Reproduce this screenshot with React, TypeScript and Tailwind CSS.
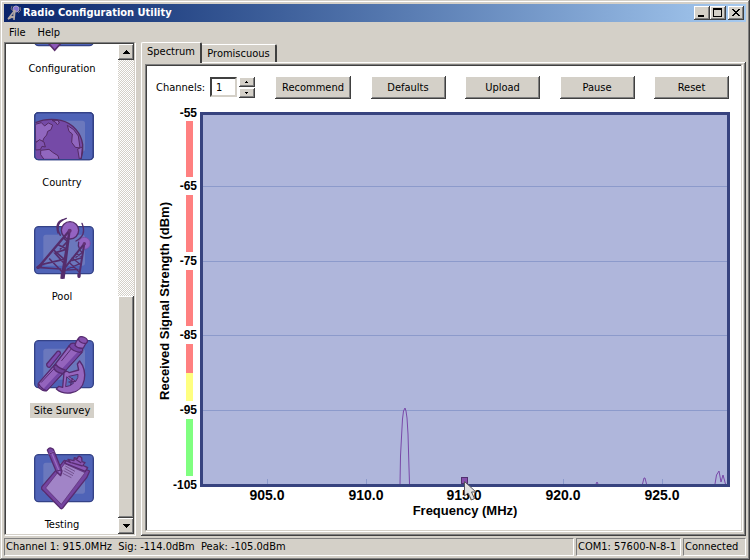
import { useState, type ReactNode } from "react";

const raised = "bg-[#d4d0c8] shadow-[inset_-1px_-1px_#404040,inset_1px_1px_#ffffff,inset_-2px_-2px_#808080]";
const sunken = "border border-t-[#808080] border-l-[#808080] border-r-[#d4d0c8] border-b-[#d4d0c8] shadow-[inset_1px_1px_#404040,1px_1px_#ffffff]";
const statusCell = "flex items-center border border-t-[#808080] border-l-[#808080] border-r-white border-b-white px-px";

function Tile({ top, children }: { top: number; children: ReactNode }) {
  return (
    <svg viewBox={`84 ${top} 204 204`} className="h-[68px] w-[68px] shrink-0" aria-hidden="true">
      <rect x="104" y={top + 38} width="176" height="141" rx="12" fill="#4f63b7" stroke="#344287" strokeWidth="4" />
      <rect x="130" y={top + 62} width="125" height="93" rx="8" fill="#6b78bd" />
      {children}
    </svg>
  );
}

function ConfigurationIcon() {
  return (
    <Tile top={36}>
      <path d="M143 205 L164 229 L185 205Z" fill="#8c58b8" stroke="#5a2c6c" strokeWidth="5" />
    </Tile>
  );
}

function CountryIcon() {
  return (
    <Tile top={30}>
      <path d="M106 98 C129 88 158 86 183 91 C221 100 244 132 248 163 Q250 187 243 207 H115 Q106 207 106 198Z" fill="#754aa7" />
      <g fill="#9167bf" stroke="#552b65" strokeWidth="3" strokeLinejoin="round">
        <path d="M106 103 L124 98 L134 108 L145 99 L158 105 L153 119 L143 124 L140 135 L132 144 L126 158 L119 150 L107 157Z" />
        <path d="M107 158 L119 149 L132 156 L136 171 L126 169 L121 179 L107 180Z" fill="#8054af" />
        <path d="M122 181 L147 178 L158 187 L174 197 L177 208 H132 L122 194Z" />
        <path d="M156 91 L174 91 L178 99 L172 104 L166 96Z" />
        <path d="M202 106 L221 119 L235 138 L240 174 L226 172 L215 157 L217 132 L207 124Z" />
        <path d="M233 177 L247 171 L244 205 L238 207Z" />
      </g>
      <path d="M106 98 C129 88 158 86 183 91 C221 100 244 132 248 163 Q250 187 243 207" fill="none" stroke="#552b65" strokeWidth="4" />
      <rect x="104" y="68" width="176" height="141" rx="12" fill="none" stroke="#344287" strokeWidth="4" />
    </Tile>
  );
}

function PoolIcon() {
  return (
    <Tile top={42}>
      <g fill="none" stroke="#552d6c" strokeLinecap="round">
        <circle cx="210" cy="91" r="26" fill="#9463c2" strokeWidth="4" />
        <circle cx="253" cy="130" r="18" fill="#9463c2" strokeWidth="2" stroke="#7548a1" />
        <path d="M181 106 Q161 69 199 55 M174 99 Q164 68 188 59 M228 123 Q261 107 246 70 M238 145 Q233 138 236 127" strokeWidth="4" />
        <path d="M208 92 L114 203" strokeWidth="7" />
        <path d="M205 92 H212 L194 236 H181Z" fill="#552d6c" stroke="none" />
        <path d="M112 202 L182 207 M149 177 L187 216 M176 135 L202 148 M192 115 L205 126 M163 152 L194 179 M202 125 L181 147 M198 148 L164 159 L190 187 M191 178 L124 194" strokeWidth="5" />
        <path d="M253 131 L190 209 M253 131 L237 230" strokeWidth="6" />
        <path d="M187 211 L234 208 M207 187 L237 215 M228 161 L247 171 M238 149 L248 158 M217 174 L242 194 M246 158 L228 172 M243 174 L216 182 M240 191 L202 207" strokeWidth="4" />
        <path d="M114 202 L122 197 M187 223 V232 M237 223 V229" strokeWidth="10" />
      </g>
      <circle cx="209" cy="92" r="6" fill="#643278" />
      <circle cx="253" cy="131" r="5" fill="#643278" />
    </Tile>
  );
}

function SurveyIcon() {
  return (
    <Tile top={24}>
      <g stroke="#562b70" strokeWidth="4" strokeLinejoin="round" strokeLinecap="round">
        <path d="M192 158 Q200 150 208 158 L236 150 L232 132 L239 123 C262 152 262 212 211 219 Q186 222 169 207 L176 199 L188 202Z" fill="#9767bf" />
        <path d="M207 169 L234 163 Q236 172 228 183Z M201 171 L221 189 Q212 199 198 200Z" fill="#5b6cb9" strokeWidth="3" />
        <path d="M207 186 L226 184 M217 176 L212 194" fill="none" />
        <path d="M140 132 L172 94 Q180 91 182 101 L149 142 Q140 143 140 132Z" fill="#7c4caf" />
        <path d="M115 190 L166 132 L207 78 L246 97 L197 151 L141 211 Q132 216 122 207 Q112 202 115 190Z" fill="#9464bd" />
        <path d="M136 207 L188 151 L237 98" stroke="#7446a6" strokeWidth="9" fill="none" />
        <path d="M141 211 L197 151 L246 97 M124 187 L168 140 M185 122 L216 84" fill="none" strokeWidth="3" />
        <path d="M166 132 Q177 146 198 151 L188 161 Q163 157 161 140Z" fill="#714399" />
        <path d="M207 78 Q217 94 239 97 L248 93 Q250 83 237 76 Q222 66 213 71Z" fill="#7545a5" />
        <path d="M225 76 Q227 65 235 55 L260 66 L250 84 Q234 87 225 76Z" fill="#9464bd" />
        <ellipse cx="249" cy="60" rx="14" ry="9" transform="rotate(24 249 60)" fill="#8551ad" />
        <path d="M116 191 Q122 205 139 212" fill="none" />
      </g>
    </Tile>
  );
}

function TestingIcon() {
  return (
    <Tile top={36}>
      <g stroke="#582c70" strokeWidth="4" strokeLinejoin="round">
        <path d="M193 91 L269 123 L260 143 L188 234 Q184 240 177 230 L125 177 Q123 172 129 166Z" fill="#7544a0" />
        <path d="M194 101 L255 128 L184 223 L137 174Z" fill="#a184c7" strokeWidth="2" />
        <path d="M204 88 L222 92 L223 83 L232 86 Q235 73 245 83 L246 95 L255 98 L249 106 L263 113 L256 124 L194 99 L199 92 L212 98Z" fill="#8b58b5" />
        <path d="M214 98 L248 108 M226 87 L244 99" />
        <path d="M196 108 L225 124 M194 115 L222 131 M191 122 L219 137 M188 130 L214 143" stroke="#5a3872" strokeWidth="2" />
        <path d="M142 60 Q149 49 160 58 L186 123 L182 137 L169 125Z" fill="#7646a4" />
        <path d="M145 73 L163 65 M155 68 L180 129" stroke="#9a6cc0" strokeWidth="4" />
        <path d="M146 73 L163 66 M170 123 L184 120" strokeWidth="3" />
      </g>
    </Tile>
  );
}

const sections = [
  { name: "Configuration", icon: <ConfigurationIcon /> },
  { name: "Country", icon: <CountryIcon /> },
  { name: "Pool", icon: <PoolIcon /> },
  { name: "Site Survey", icon: <SurveyIcon /> },
  { name: "Testing", icon: <TestingIcon /> },
];

function Arrow({ down = false }: { down?: boolean }) {
  return (
    <svg viewBox="0 0 7 4" className="h-1 w-[7px]" shapeRendering="crispEdges" aria-hidden="true">
      <path d={down ? "M0 0H7V1H6V2H5V3H4V4H3V3H2V2H1V1H0Z" : "M0 4H7V3H6V2H5V1H4V0H3V1H2V2H1V3H0Z"} />
    </svg>
  );
}

function SpinArrow({ down = false }: { down?: boolean }) {
  return (
    <svg viewBox="0 0 3 2" className="mr-px h-[2px] w-[3px]" shapeRendering="crispEdges" aria-hidden="true">
      <path d={down ? "M0 0H3V1H2V2H1V1H0Z" : "M0 2H3V1H2V0H1V1H0Z"} />
    </svg>
  );
}

function Sidebar() {
  const [selected, setSelected] = useState("Site Survey");

  return (
    <aside className={`mr-px mb-px flex w-[131px] shrink-0 bg-white pt-px pl-px ${sunken}`}>
      <nav className="flex min-h-0 flex-1 flex-col items-center justify-end gap-6 overflow-hidden pb-0.5">
        {sections.map((s) => (
          <button key={s.name} onClick={() => setSelected(s.name)} className="flex shrink-0 flex-col items-center gap-[7px]">
            {s.icon}
            <span className={`h-[15px] px-1 leading-4 whitespace-nowrap ${s.name === selected ? "bg-[#d4d0c8]" : ""}`}>{s.name}</span>
          </button>
        ))}
      </nav>
      <div className="flex w-4 flex-col bg-[conic-gradient(#d4d0c8_25%,#ffffff_0_50%,#d4d0c8_0_75%,#ffffff_0)] bg-[length:2px_2px]">
        <button aria-label="Scroll up" className={`flex h-4 shrink-0 items-center justify-center ${raised}`}><Arrow /></button>
        <div className="flex-[235]" />
        <div className={`flex-[222] ${raised}`} />
        <button aria-label="Scroll down" className={`flex h-4 shrink-0 items-center justify-center ${raised}`}><Arrow down /></button>
      </div>
    </aside>
  );
}

const levels = [
  { label: "-55", y: 14 },
  { label: "-65", y: 87 },
  { label: "-75", y: 162 },
  { label: "-85", y: 236 },
  { label: "-95", y: 311 },
  { label: "-105", y: 386 },
];

const frequencies = [
  { label: "905.0", x: 120 },
  { label: "910.0", x: 219 },
  { label: "915.0", x: 317 },
  { label: "920.0", x: 416 },
  { label: "925.0", x: 515 },
];

const bars = [
  { y: 22, h: 56, color: "#ff8080" },
  { y: 96, h: 57, color: "#ff8080" },
  { y: 171, h: 56, color: "#ff8080" },
  { y: 245, h: 29, color: "#ff8080" },
  { y: 274, h: 28, color: "#ffff80" },
  { y: 320, h: 57, color: "#80ff80" },
];

function SpectrumChart() {
  return (
    <svg
      viewBox="0 0 594 431"
      className="min-h-0 w-full flex-1 font-['Liberation_Sans',Arial,sans-serif] font-bold"
      role="img"
      aria-label="Received signal strength by frequency"
    >
      <g shapeRendering="crispEdges">
        {bars.map((b) => (
          <rect key={b.y} x="39" y={b.y} width="7" height={b.h} fill={b.color} />
        ))}
        <rect x="53" y="13" width="530" height="375" fill="#37437f" />
        <rect x="56" y="16" width="524" height="369" fill="#afb6db" />
        {levels.slice(1, 5).map((l) => (
          <rect key={l.y} x="56" y={l.y} width="524" height="1" fill="#8c9acb" />
        ))}
        {frequencies.map((f) => (
          <rect key={f.x} x={f.x} y="380" width="1" height="5" fill="#8c9acb" />
        ))}
      </g>
      <g fontSize="12" textAnchor="end">
        {levels.map((l) => (
          <text key={l.label} x="50" y={l.y + 4}>{l.label}</text>
        ))}
      </g>
      <g fontSize="14" textAnchor="middle">
        {frequencies.map((f) => (
          <text key={f.label} x={f.x} y="401">{f.label}</text>
        ))}
      </g>
      <text x="318" y="416" fontSize="13" textAnchor="middle">Frequency (MHz)</text>
      <text transform="translate(22 202) rotate(-90)" fontSize="13" textAnchor="middle">Received Signal Strength (dBm)</text>

      <g fill="none" stroke="#7848a8">
        <path d="M253 385L253.5 357L254.5 338L255.5 320L256.5 312L258 309L259 312L260 319L261 335L262 369L262.5 385" />
        <path d="M449 385L450 383L451 385M495.500 385L497 379L498 379L499.500 385" />
        <path d="M568 385L569.5 376L572 372L574 383L576 376L578.5 385" />
      </g>
      <rect x="314.500" y="378.500" width="6" height="6" fill="#8650ad" stroke="#51306f" />
      <path d="M317.500 382.500V397L321 394L324.500 401L327.500 399.500L324.500 393H329Z" fill="#e2e2e2" stroke="#55555f" />
    </svg>
  );
}

const actions = ["Recommend", "Defaults", "Upload", "Pause", "Reset"];

function SpectrumPanel() {
  const [channels, setChannels] = useState(1);

  return (
    <div className={`mr-px mb-px flex min-h-0 flex-1 flex-col bg-white pt-[11px] pl-px ${sunken}`}>
      <div className="flex h-[23px] shrink-0 pr-3 pl-[9px]">
        <label htmlFor="channels" className="w-[54px] shrink-0 leading-6">Channels:</label>
        <input
          id="channels"
          value={channels}
          onChange={(e) => setChannels(Number(e.target.value) || 1)}
          className="mt-px h-5 w-[27px] shrink-0 border-2 border-t-[#404040] border-r-[#d4d0c8] border-b-[#d4d0c8] border-l-[#404040] bg-white pl-1 outline-none"
        />
        <div className="mt-px mr-5 ml-0.5 flex w-4 shrink-0 flex-col gap-px">
          <button aria-label="More channels" onClick={() => setChannels(channels + 1)} className={`flex h-2.5 items-center justify-center ${raised}`}><SpinArrow /></button>
          <button aria-label="Fewer channels" onClick={() => setChannels(Math.max(1, channels - 1))} className={`flex h-2.5 items-center justify-center ${raised}`}><SpinArrow down /></button>
        </div>
        <div className="flex flex-1 justify-between">
          {actions.map((a) => (
            <button key={a} className={`w-[75px] first:w-[76px] ${raised}`}>{a}</button>
          ))}
        </div>
      </div>
      <SpectrumChart />
    </div>
  );
}

function TitleBar() {
  return (
    <header className="flex h-[18px] shrink-0 items-center bg-linear-to-r from-[#0a246a] to-[#a6caf0] px-0.5 text-white">
      <svg viewBox="0 0 16 16" className="mr-px h-4 w-4" aria-hidden="true">
        <circle cx="10" cy="4" r="3" fill="#8272d2" stroke="#a9a0c0" />
        <path d="M6 1Q4 4 7 6M14 2Q16 6 12 8" fill="none" stroke="#86777f" />
        <path d="M9 5L2 14M9 5L8 15M4 11L8 13M6 8L9 10M2 14L8 11" fill="none" stroke="#b4a9a6" strokeWidth="1.500" />
      </svg>
      <h1 className="flex-1 font-bold">Radio Configuration Utility</h1>
      <button aria-label="Minimize" className={`h-3.5 w-4 ${raised}`}>
        <svg viewBox="0 0 16 14" className="text-black" fill="currentColor" shapeRendering="crispEdges"><path d="M4 9H10V11H4Z" /></svg>
      </button>
      <button aria-label="Maximize" className={`mr-0.5 h-3.5 w-4 ${raised}`}>
        <svg viewBox="0 0 16 14" className="text-black" fill="currentColor" shapeRendering="crispEdges"><path d="M3 2H12V11H3ZM4 4V10H11V4Z" fillRule="evenodd" /></svg>
      </button>
      <button aria-label="Close" className={`h-3.5 w-4 ${raised}`}>
        <svg viewBox="0 0 16 14" className="text-black" fill="currentColor" shapeRendering="crispEdges"><path d="M4 3H6V4H7V5H9V4H10V3H12V4H11V5H10V6H9V7H10V8H11V9H12V10H10V9H9V8H7V9H6V10H4V9H5V8H6V7H7V6H6V5H5V4H4Z" /></svg>
      </button>
    </header>
  );
}

export default function App() {
  return (
    <div className="flex h-screen flex-col bg-[#d4d0c8] p-1 font-['DejaVu_Sans_Condensed','DejaVu_Sans',sans-serif] text-[11px] leading-4 text-black shadow-[inset_-1px_-1px_#404040,inset_1px_1px_#d4d0c8,inset_-2px_-2px_#808080,inset_2px_2px_#ffffff]">
      <TitleBar />
      <div className="flex h-5 shrink-0 items-end gap-3 pb-px pl-[5px]">
        <button>File</button>
        <button>Help</button>
      </div>
      <main className="flex min-h-0 flex-1">
        <Sidebar />
        <section className="ml-[5px] flex min-w-0 flex-1 flex-col">
          <div role="tablist" className="flex h-5 shrink-0 items-end">
            <button role="tab" aria-selected="true" className="z-10 -mb-px h-[21px] w-[61px] rounded-t-[2px] border-t border-r-2 border-l border-t-white border-r-[#404040] border-l-white bg-[#d4d0c8] pb-0.5 text-center">
              Spectrum
            </button>
            <button role="tab" aria-selected="false" className="h-[18px] w-[75px] rounded-tr-[2px] border-t border-r-2 border-t-white border-r-[#404040]">
              Promiscuous
            </button>
          </div>
          <div className={`flex min-h-0 flex-1 flex-col pt-0.5 pr-[3px] pb-1 pl-1 ${raised}`}>
            <SpectrumPanel />
          </div>
        </section>
      </main>
      <footer className="mt-0.5 flex h-[18px] shrink-0 gap-0.5 whitespace-nowrap">
        <div className={`flex-1 whitespace-pre ${statusCell}`}>Channel 1: 915.0MHz  Sig: -114.0dBm  Peak: -105.0dBm</div>
        <div className={`w-[105px] ${statusCell}`}>COM1: 57600-N-8-1</div>
        <div className={`w-[63px] ${statusCell}`}>Connected</div>
      </footer>
    </div>
  );
}
